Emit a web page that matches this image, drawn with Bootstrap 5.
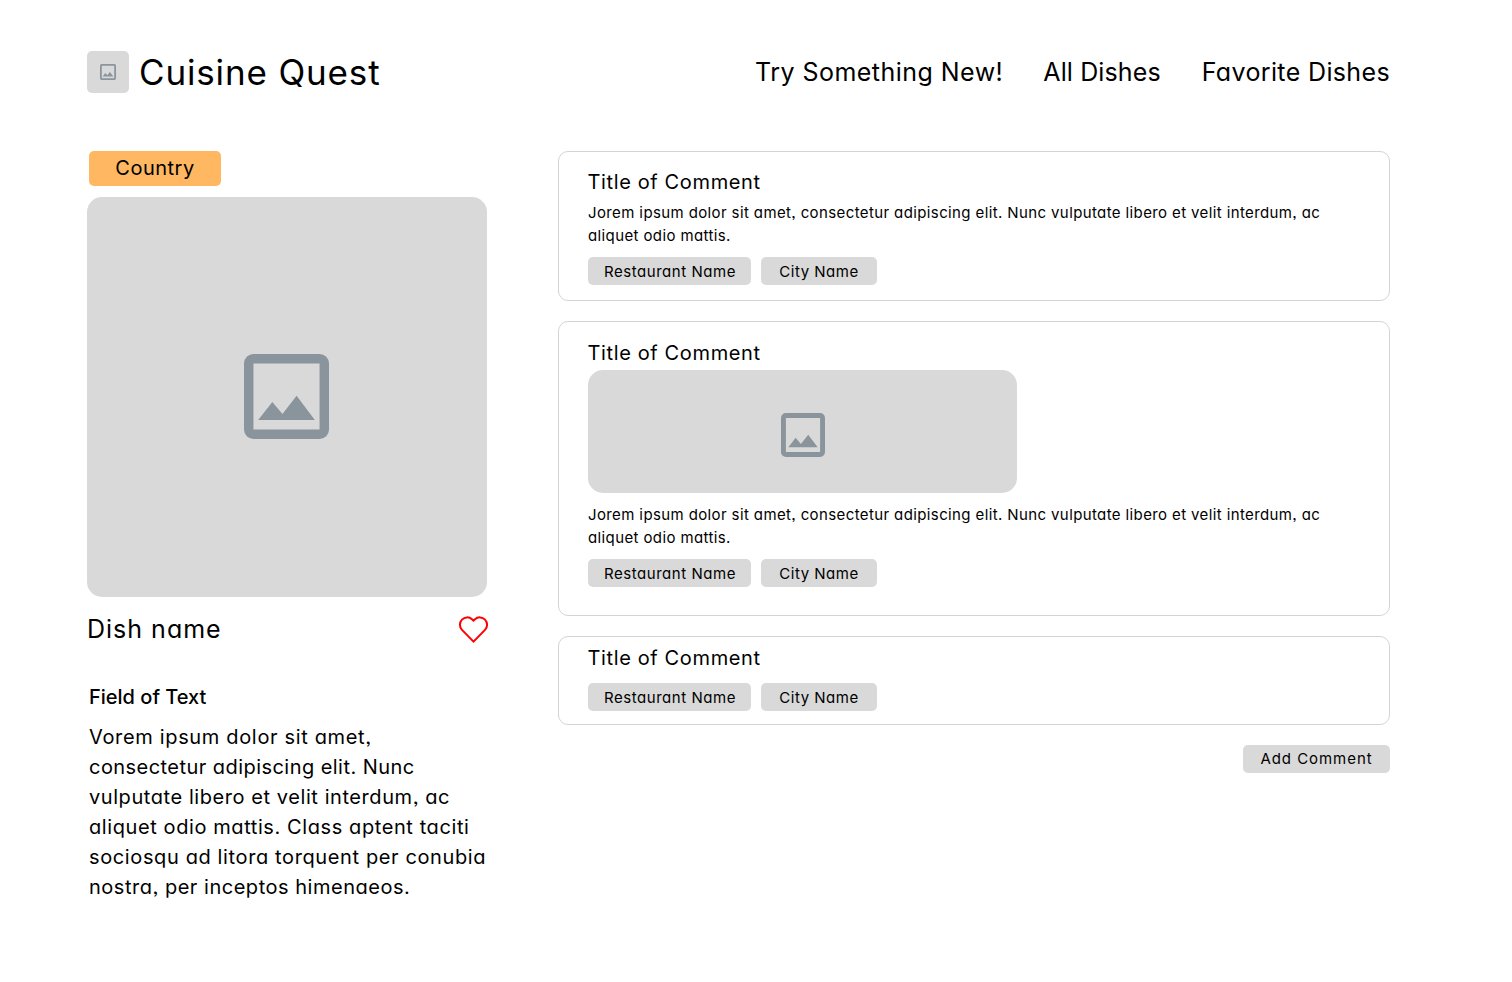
<!DOCTYPE html>
<html lang="en">
<head>
<meta charset="utf-8">
<meta name="viewport" content="width=device-width, initial-scale=1">
<title>Cuisine Quest</title>
<link href="https://cdn.jsdelivr.net/npm/bootstrap@5.3.0/dist/css/bootstrap.min.css" rel="stylesheet">
<style>
body{font-family:Inter,"Open Sans",sans-serif;font-feature-settings:"cv11","ss03";color:#000;background:#fff;font-size:20px;line-height:30px}
.page{padding:51px 122px 0 87px}
.logo{width:42px;height:42px;border-radius:5px}
.fill{background:#d9d9d9}
.pic{color:#8a949c;display:block}
.brand{font-size:35px;line-height:42px;letter-spacing:.85px;color:#000}
.brand-link{gap:10px}
.menu{gap:41px;font-size:25px;line-height:43px}
.menu a{color:#000;text-decoration:none;white-space:nowrap}
.n1{letter-spacing:.47px;margin-right:-1px}.n2{letter-spacing:.12px}.n3{letter-spacing:.36px}
.content{margin-top:57px;gap:71px}
.dish{width:400px}
.country{margin-left:2px;width:132px;height:35px;border-radius:5px;background:#ffb762;color:#000;line-height:35px;letter-spacing:.5px}
.photo{height:400px;margin-top:11px;border-radius:15px;padding:0 1px 1px 0}
.dish-head{margin-top:14px}
.dish-title{font-size:25px;line-height:37px;font-weight:400;letter-spacing:1px}
.heart{margin:4px -2px 0 0}
.about{margin-left:2px;margin-top:34px}
.about h2{font-size:20px;line-height:30px;font-weight:500;margin-bottom:10px}
.about p span{display:block;white-space:nowrap}
.l1{letter-spacing:.66px}.l2{letter-spacing:.45px}.l3{letter-spacing:.57px}.l4{letter-spacing:.59px}.l5{letter-spacing:.62px}.l6{letter-spacing:.52px}
.comments{width:832px;gap:20px}
.comment{height:150px;border:1px solid #d4d4d4;border-radius:10px;padding:15px 29px}
.comment-photo{height:295px;padding-top:16px}
.comment-short{height:89px;padding-top:6px}
.comment h3{font-size:20px;line-height:30px;font-weight:400;margin:0 0 0 -.5px;letter-spacing:.63px}
.comment p{font-size:15px;line-height:23px;margin:4px 0 0;white-space:nowrap;letter-spacing:.385px}
.comment-photo p{margin-top:10px}
.thumb{width:429px;height:123px;border-radius:15px;margin-top:2px;padding-top:6px}
.tags{gap:10px;margin-top:10px}
.chip{height:28px;border-radius:5px;font-size:15px;line-height:28px;text-align:center;white-space:nowrap;border:0;padding:0;color:#000}
.tags .chip{line-height:30px}
.c1{width:163px;letter-spacing:.54px;text-indent:1px}.c2{width:116px;letter-spacing:.5px}.add{width:147px;letter-spacing:.95px}
</style>
</head>
<body>
<svg class="d-none"><symbol id="pic" viewBox="0 0 18 18"><path fill="currentColor" fill-rule="evenodd" d="M2 0H16A2 2 0 0 1 18 2V16A2 2 0 0 1 16 18H2A2 2 0 0 1 0 16V2A2 2 0 0 1 2 0ZM2 2V16H16V2ZM11.14 8.86L8.14 12.73L6 10.14L3 14H15Z"/></symbol></svg>
<div class="page">
<header class="d-flex justify-content-between">
<a class="brand-link d-flex text-decoration-none" href="#"><span class="logo fill d-flex align-items-center justify-content-center"><svg class="pic" width="16" height="16"><use href="#pic"/></svg></span><span class="brand">Cuisine Quest</span></a>
<nav class="menu d-flex"><a href="#" class="n1">Try Something New!</a><a href="#" class="n2">All Dishes</a><a href="#" class="n3">Favorite Dishes</a></nav>
</header>
<main class="content d-flex align-items-start">
<section class="dish flex-shrink-0">
<div class="country text-center">Country</div>
<div class="photo fill d-flex align-items-center justify-content-center"><svg class="pic" width="85" height="85"><use href="#pic"/></svg></div>
<div class="dish-head d-flex justify-content-between"><h1 class="dish-title m-0">Dish name</h1>
<svg class="heart" width="31" height="29" viewBox="0 0 31 29" fill="none" stroke="#f00" stroke-width="2"><path d="M15.500 26.600 4 14.900A7.400 7.400 0 0 1 4 4.600A7.200 7.200 0 0 1 14 4.200L15.500 5.600L17 4.200A7.200 7.200 0 0 1 27 4.600A7.400 7.400 0 0 1 27 14.900Z"/></svg></div>
<div class="about"><h2>Field of Text</h2><p class="m-0"><span class="l1">Vorem ipsum dolor sit amet,</span><span class="l2">consectetur adipiscing elit. Nunc</span><span class="l3">vulputate libero et velit interdum, ac</span><span class="l4">aliquet odio mattis. Class aptent taciti</span><span class="l5">sociosqu ad litora torquent per conubia</span><span class="l6">nostra, per inceptos himenaeos.</span></p></div>
</section>
<section class="comments d-flex flex-column flex-shrink-0">
<article class="comment"><h3>Title of Comment</h3><p>Jorem ipsum dolor sit amet, consectetur adipiscing elit. Nunc vulputate libero et velit interdum, ac<br>aliquet odio mattis.</p>
<div class="tags d-flex"><span class="chip fill c1">Restaurant Name</span><span class="chip fill c2">City Name</span></div></article>
<article class="comment comment-photo"><h3>Title of Comment</h3><div class="thumb fill d-flex align-items-center justify-content-center"><svg class="pic" width="44" height="44"><use href="#pic"/></svg></div><p>Jorem ipsum dolor sit amet, consectetur adipiscing elit. Nunc vulputate libero et velit interdum, ac<br>aliquet odio mattis.</p>
<div class="tags d-flex"><span class="chip fill c1">Restaurant Name</span><span class="chip fill c2">City Name</span></div></article>
<article class="comment comment-short"><h3>Title of Comment</h3>
<div class="tags d-flex"><span class="chip fill c1">Restaurant Name</span><span class="chip fill c2">City Name</span></div></article>
<button type="button" class="chip fill add align-self-end">Add Comment</button>
</section>
</main>
</div>
<script src="https://cdn.jsdelivr.net/npm/bootstrap@5.3.0/dist/js/bootstrap.bundle.min.js"></script>
</body>
</html>
